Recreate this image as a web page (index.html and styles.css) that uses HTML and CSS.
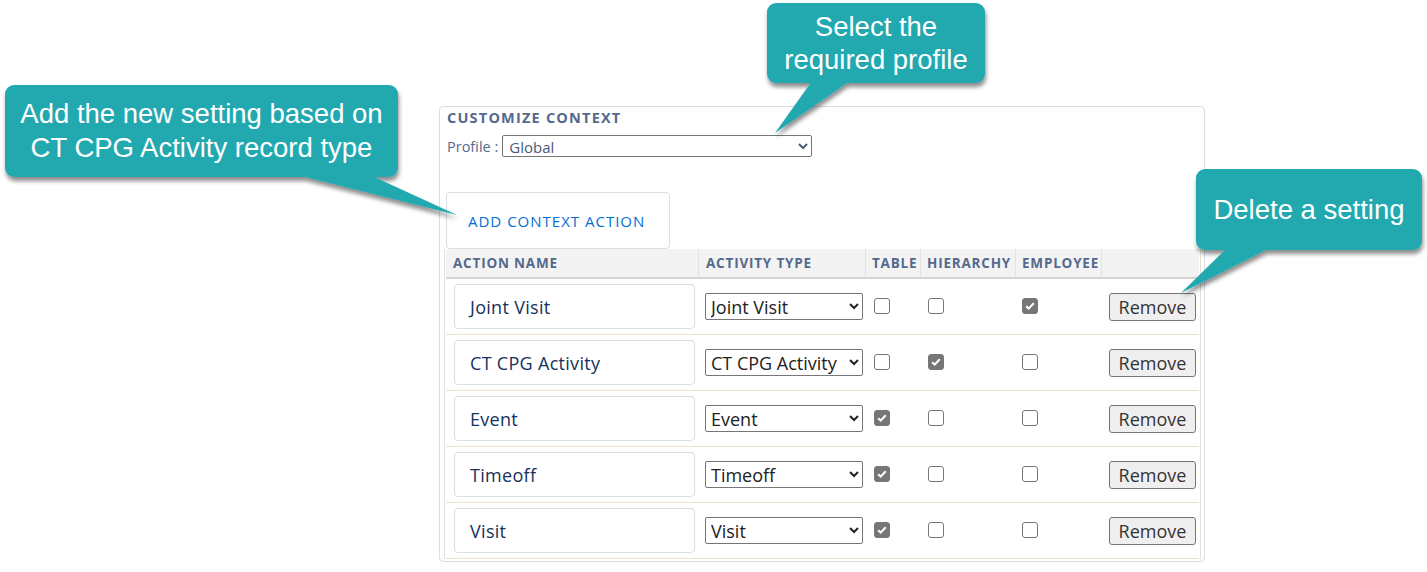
FILE: index.html
```html
<!DOCTYPE html>
<html>
<head>
<meta charset="utf-8">
<link rel="stylesheet" href="styles.css">
</head>
<body>
<div class="panel">
  <div class="title">CUSTOMIZE CONTEXT</div>
  <div class="profile-row">
    <span class="profile-label">Profile :</span>
    <select class="profile-select"><option>Global</option></select>
  </div>
  <div class="add-btn">ADD CONTEXT ACTION</div>
  <div class="table">
    <div class="row head">
      <div class="cell">ACTION NAME</div>
      <div class="cell">ACTIVITY TYPE</div>
      <div class="cell">TABLE</div>
      <div class="cell">HIERARCHY</div>
      <div class="cell">EMPLOYEE</div>
      <div class="cell last"></div>
    </div>
    <div class="row">
      <div class="cell c-name"><div class="name-input">Joint Visit</div></div>
      <div class="cell c-type"><select class="type-select"><option>Joint Visit</option></select></div>
      <div class="cell c-chk"><span class="chk"></span></div>
      <div class="cell c-chk"><span class="chk"></span></div>
      <div class="cell c-chk"><span class="chk on"><svg viewBox="0 0 16 16"><path d="M3.6 8.2l2.9 2.8L12.3 4.8" /></svg></span></div>
      <div class="cell c-btn"><span class="remove">Remove</span></div>
    </div>
    <div class="row">
      <div class="cell c-name"><div class="name-input">CT CPG Activity</div></div>
      <div class="cell c-type"><select class="type-select"><option>CT CPG Activity</option></select></div>
      <div class="cell c-chk"><span class="chk"></span></div>
      <div class="cell c-chk"><span class="chk on"><svg viewBox="0 0 16 16"><path d="M3.6 8.2l2.9 2.8L12.3 4.8" /></svg></span></div>
      <div class="cell c-chk"><span class="chk"></span></div>
      <div class="cell c-btn"><span class="remove">Remove</span></div>
    </div>
    <div class="row">
      <div class="cell c-name"><div class="name-input">Event</div></div>
      <div class="cell c-type"><select class="type-select"><option>Event</option></select></div>
      <div class="cell c-chk"><span class="chk on"><svg viewBox="0 0 16 16"><path d="M3.6 8.2l2.9 2.8L12.3 4.8" /></svg></span></div>
      <div class="cell c-chk"><span class="chk"></span></div>
      <div class="cell c-chk"><span class="chk"></span></div>
      <div class="cell c-btn"><span class="remove">Remove</span></div>
    </div>
    <div class="row">
      <div class="cell c-name"><div class="name-input">Timeoff</div></div>
      <div class="cell c-type"><select class="type-select"><option>Timeoff</option></select></div>
      <div class="cell c-chk"><span class="chk on"><svg viewBox="0 0 16 16"><path d="M3.6 8.2l2.9 2.8L12.3 4.8" /></svg></span></div>
      <div class="cell c-chk"><span class="chk"></span></div>
      <div class="cell c-chk"><span class="chk"></span></div>
      <div class="cell c-btn"><span class="remove">Remove</span></div>
    </div>
    <div class="row">
      <div class="cell c-name"><div class="name-input">Visit</div></div>
      <div class="cell c-type"><select class="type-select"><option>Visit</option></select></div>
      <div class="cell c-chk"><span class="chk on"><svg viewBox="0 0 16 16"><path d="M3.6 8.2l2.9 2.8L12.3 4.8" /></svg></span></div>
      <div class="cell c-chk"><span class="chk"></span></div>
      <div class="cell c-chk"><span class="chk"></span></div>
      <div class="cell c-btn"><span class="remove">Remove</span></div>
    </div>
  </div>
</div>

<svg class="callout-shapes" width="1427" height="572" viewBox="0 0 1427 572">
  <defs>
    <filter id="sh" x="-10%" y="-10%" width="130%" height="140%">
      <feDropShadow dx="1" dy="4" stdDeviation="2.2" flood-color="#000" flood-opacity="0.45"/>
    </filter>
  </defs>
  <g filter="url(#sh)" fill="#22a9b0">
    <rect x="5" y="85" width="393" height="92" rx="9"/>
    <polygon points="297,175 370,175 457,215"/>
    <rect x="767" y="3" width="218" height="80" rx="9"/>
    <polygon points="812,81 850,81 775,133"/>
    <rect x="1196" y="169" width="226" height="81" rx="9"/>
    <polygon points="1227,248 1270,248 1181,293"/>
  </g>
</svg>
<div class="callout-text ct1">Add the new setting based on<br>CT CPG Activity record type</div>
<div class="callout-text ct2">Select the<br>required profile</div>
<div class="callout-text ct3">Delete a setting</div>
</body>
</html>
```
FILE: styles.css
```css
html, body {
  margin: 0;
  padding: 0;
  background: #fff;
}
body {
  width: 1427px;
  height: 572px;
  position: relative;
  overflow: hidden;
  font-family: "Open Sans", Lato, sans-serif;
}
.panel {
  margin: 106px 0 0 439px;
  width: 766px;
  height: 456px;
  box-sizing: border-box;
  border: 1px solid #d8dde6;
  border-radius: 4px;
  padding: 0 3px 0 4px;
}
.title {
  margin-left: 3px;
  height: 21px;
  line-height: 21px;
  font-size: 14.5px;
  font-weight: 700;
  letter-spacing: 1.2px;
  color: #54698d;
}
.profile-row {
  margin-top: 7px;
  margin-left: 3px;
  height: 22px;
  display: flex;
  align-items: center;
  gap: 4px;
}
.profile-label {
  font-size: 14.5px;
  color: #54698d;
}
.profile-select {
  width: 310px;
  height: 22px;
  font-family: "Open Sans", sans-serif;
  font-size: 15px;
  color: #4a5a78;
  border: 1px solid #767676;
  border-radius: 2px;
  background: #fff;
  padding: 0 2px;
}
.add-btn {
  margin: 35px 0 0 2px;
  width: 224px;
  height: 57px;
  box-sizing: border-box;
  border: 1px solid #d8dde6;
  border-radius: 4px;
  display: flex;
  align-items: center;
  padding-left: 21px;
  font-size: 15px;
  letter-spacing: 1px;
  color: #0070d2;
  white-space: nowrap;
}
.table {
  width: 757px;
  box-sizing: border-box;
  border-left: 1px solid #e4e2da;
  border-right: 1px solid #e4e2da;
  padding: 0 1px;
}
.row {
  display: grid;
  grid-template-columns: 253px 167px 55px 95px 86px 97px;
  height: 56px;
  box-sizing: border-box;
  border-bottom: 1px solid #e9e3cc;
  align-items: center;
}
.row.head {
  height: 30px;
  background: #f3f3f3;
  border-bottom: 2px solid #d4d4d4;
  align-items: stretch;
}
.head .cell {
  display: flex;
  align-items: center;
  padding-left: 7px;
  font-size: 13.5px;
  font-weight: 700;
  letter-spacing: 0.8px;
  color: #54698d;
  border-right: 1px solid #e2e2e2;
  white-space: nowrap;
  overflow: hidden;
}
.head .cell:nth-child(3),
.head .cell:nth-child(4),
.head .cell:nth-child(5) {
  padding-left: 6px;
}
.head .cell.last {
  border-right: none;
}
.c-name {
  padding-left: 8px;
}
.name-input {
  width: 241px;
  height: 45px;
  box-sizing: border-box;
  border: 1px solid #d8dde6;
  border-radius: 4px;
  display: flex;
  align-items: center;
  padding-left: 15px;
  font-size: 18px;
  letter-spacing: 0.3px;
  color: #16325c;
}
.c-type {
  padding-left: 6px;
}
.type-select {
  width: 158px;
  height: 27px;
  font-family: "Open Sans", sans-serif;
  font-size: 18px;
  color: #222;
  border: 1px solid #767676;
  border-radius: 2px;
  background: #fff;
  padding: 0 1px;
}
.c-chk {
  padding-left: 8px;
  display: flex;
  align-items: center;
}
.c-chk:nth-child(4) { padding-left: 7px; }
.c-chk:nth-child(5) { padding-left: 6px; }
.chk {
  width: 16px;
  height: 16px;
  box-sizing: border-box;
  border: 1px solid #767676;
  border-radius: 3px;
  background: #fff;
  display: block;
  margin-top: -2px;
}
.chk.on {
  background: #767676;
}
.chk svg {
  display: block;
  width: 14px;
  height: 14px;
}
.chk svg path {
  fill: none;
  stroke: #fff;
  stroke-width: 2.4;
}
.c-btn {
  padding-left: 7px;
}
.remove {
  display: flex;
  align-items: center;
  justify-content: center;
  width: 87px;
  height: 28px;
  box-sizing: border-box;
  border: 1px solid #767676;
  border-radius: 3px;
  background: #efefef;
  font-size: 18px;
  color: #333;
}
.callout-shapes {
  position: absolute;
  left: 0;
  top: 0;
  pointer-events: none;
}
.callout-text {
  position: absolute;
  font-family: "Liberation Sans", Arial, sans-serif;
  color: #fff;
  font-size: 27.5px;
  line-height: 34px;
  text-align: center;
  white-space: nowrap;
}
.ct1 {
  left: 5px;
  top: 97px;
  width: 393px;
}
.ct2 {
  left: 767px;
  top: 10px;
  width: 218px;
  line-height: 33px;
}
.ct3 {
  left: 1196px;
  top: 193px;
  width: 226px;
}
```
